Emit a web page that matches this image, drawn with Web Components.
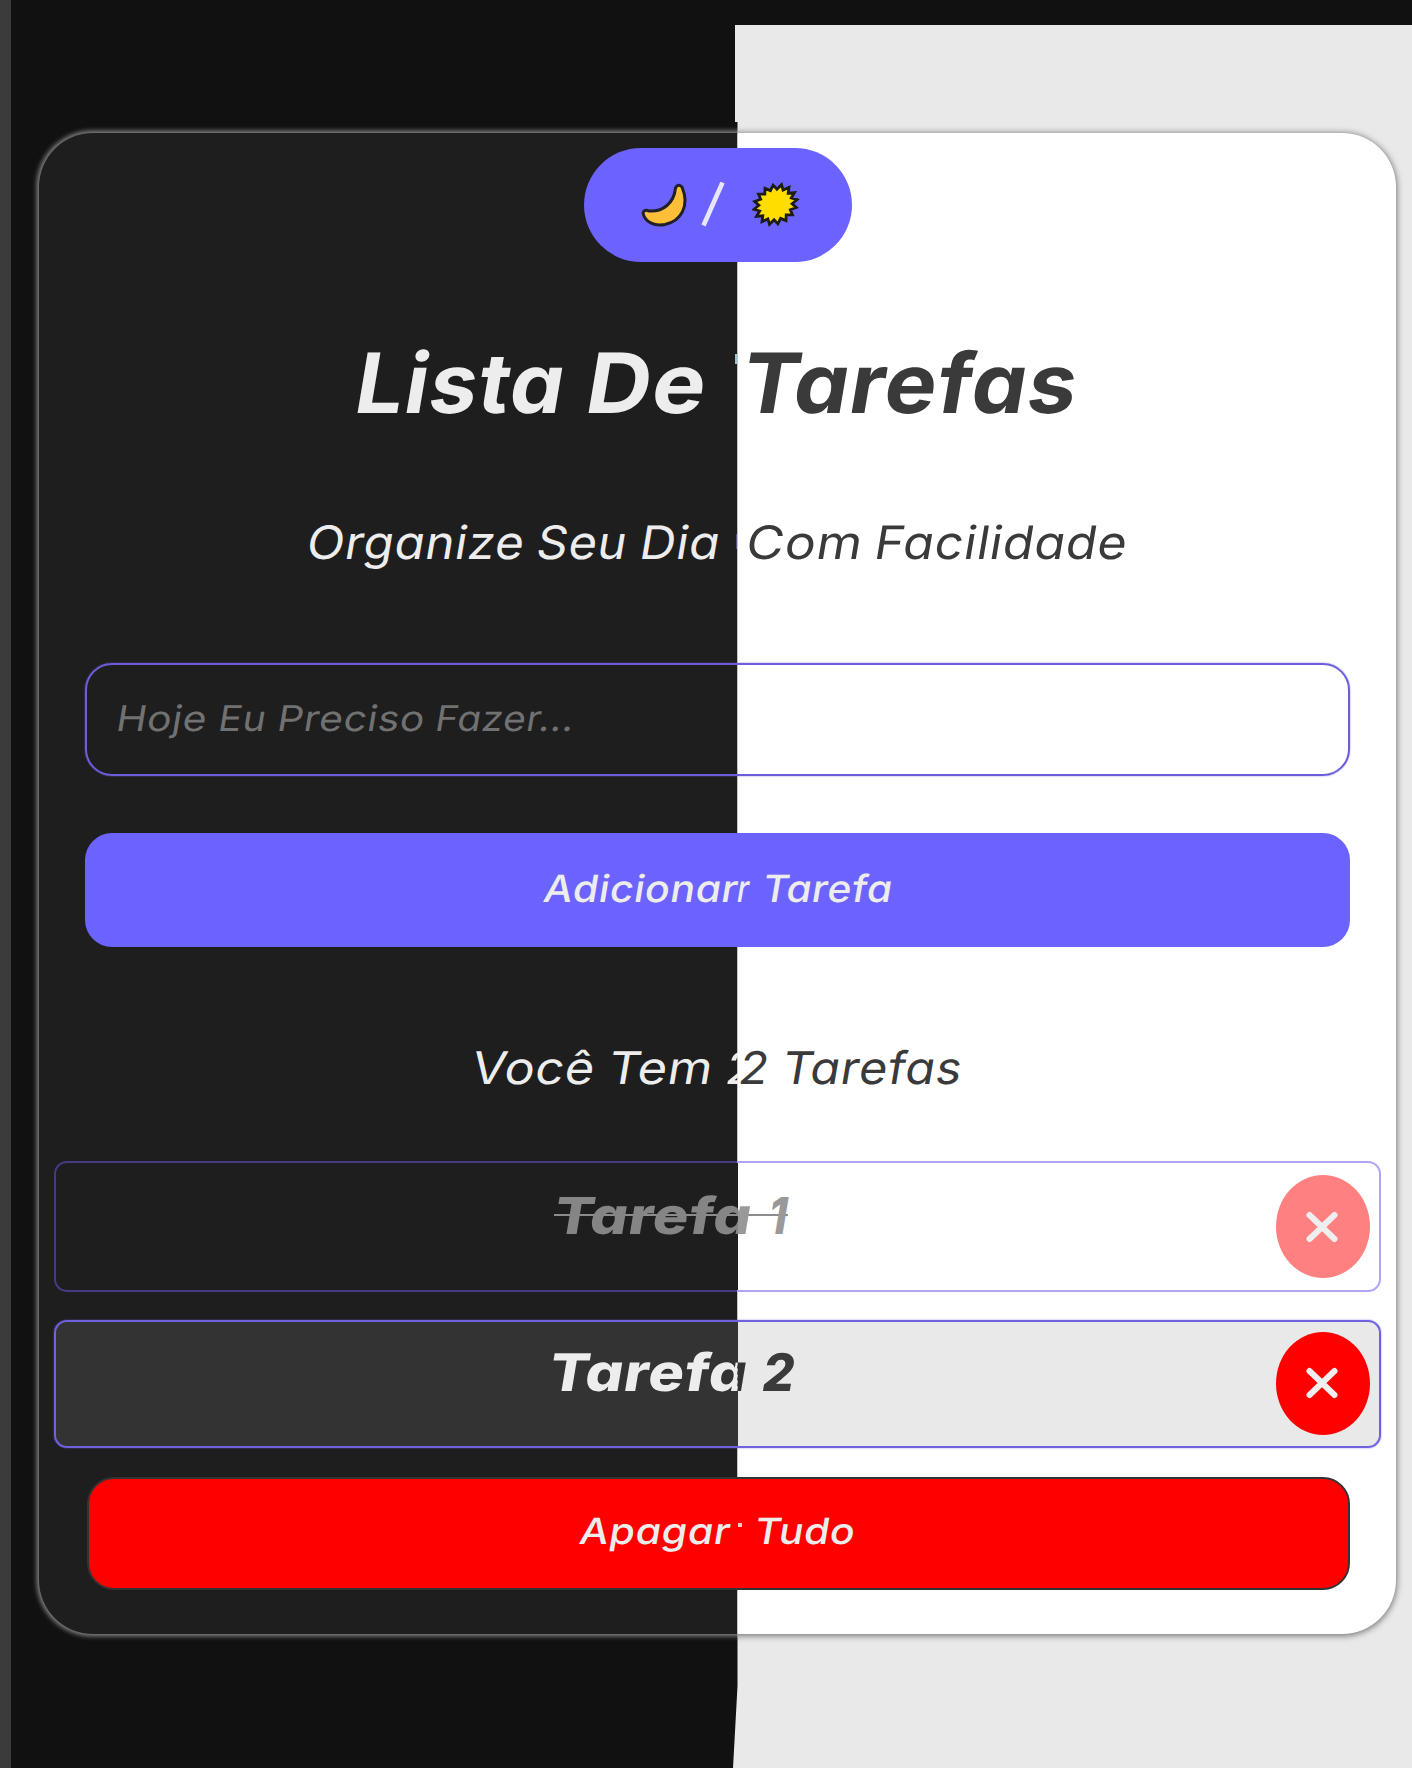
<!DOCTYPE html>
<html lang="pt-BR">
<head>
<meta charset="utf-8">
<title>Lista De Tarefas</title>
<style>
html,body{margin:0;padding:0;background:#111}
body{width:1412px;height:1768px;overflow:hidden;font-family:Inter,"Open Sans",sans-serif}
</style>
</head>
<body>
<todo-page></todo-page>
<script>
const define = (name, html, extra) => {
  const t = document.createElement('template');
  t.innerHTML = html;
  customElements.define(name, class extends HTMLElement {
    connectedCallback() {
      if (this.shadowRoot) return;
      this.attachShadow({ mode: 'open' }).append(t.content.cloneNode(true));
      if (extra) extra(this);
    }
  });
};

/* Themed backdrop: page colour plus the rounded card */
define('theme-backdrop', `<style>
:host{display:block;box-sizing:border-box;width:1412px;height:1768px;padding:133px 0 0 39px;background:#111}
div{width:1357px;height:1501px;border-radius:54px;background:#1e1e1e;box-shadow:0 0 5px 1.5px #8c8c8c}
:host([mode=dark]){border-left:11px solid #3b3b3b;padding-left:28px}
:host([mode=light]){background:#e9e9e9;clip-path:polygon(735px 25px,1412px 25px,1412px 1768px,733px 1768px,737.5px 1686px,737.5px 122px,735px 122px)}
:host([mode=light]) div{background:#fff;box-shadow:0 1px 6px 1px #777}
</style><div></div>`);

/* A slanted word fitted between two horizontal positions */
define('fit-word', `<style>
:host{display:block;flex:none;white-space:pre;font-feature-settings:"cv11"}
:host([tone=light]){color:#ededed}
:host([tone=dark]){color:#3a3a3a}
:host([clip]){overflow:hidden}
span{display:block;width:max-content;transform-origin:0 calc(50% + .364em)}
</style><span><slot></slot></span>`);

const pen = document.createElement('canvas').getContext('2d');
const TAN = Math.tan(9.5 * Math.PI / 180);
const leftSlant = { T: .085, V: .1, O: .045, C: .035, S: .03 };
const rightSlant = { a: .088, m: .085, n: .085, u: .09, r: .09, e: .05, o: .05, s: .06, z: .05, d: .12, 'ê': .05, '1': .12, '2': .06, '.': .01 };
define('text-row', `<style>
:host{display:flex;align-items:center;width:100%;box-sizing:border-box}
</style><slot></slot>`, el => {
  let at = +el.getAttribute('origin') || 0;
  const cs = getComputedStyle(el), fs = parseFloat(cs.fontSize);
  for (const w of el.children) {
    const from = +w.getAttribute('from'), to = +w.getAttribute('to');
    if (w.localName === 'fit-word') {
      customElements.upgrade(w);
      const span = w.shadowRoot.querySelector('span'), text = w.textContent, n = text.length;
      pen.font = `${cs.fontWeight} ${fs}px Inter`;
      const m = pen.measureText(text), gap = fs * .015;
      span.style.letterSpacing = gap + 'px';
      const advance = span.getBoundingClientRect().width || m.width + gap * n;
      const ink = advance - gap - (m.width - m.actualBoundingBoxLeft - m.actualBoundingBoxRight);
      const l = (leftSlant[text[0]] || 0) * fs, r = (rightSlant[text[n - 1]] || 0) * fs;
      const s = (to - from + l - r) / ink;
      const dx = -l + m.actualBoundingBoxLeft * s;
      span.style.transform = `translateX(${dx}px) skewX(-9.5deg) scaleX(${s})`;
      if (w.hasAttribute('seam')) {
        /* two-tone fill whose edge stays vertical after the slant */
        const [seam, a, b] = w.getAttribute('seam').split(' ');
        const theta = Math.atan(TAN / s);
        const x = (seam - from - dx - TAN * .364 * fs) / s;
        const d = (x - advance / 2) * Math.cos(theta);
        span.style.width = advance + 'px';
        span.style.background = `linear-gradient(${Math.PI / 2 - theta}rad,${a} calc(50% + ${d}px),${b} calc(50% + ${d}px))`;
        span.style.webkitBackgroundClip = 'text';
        span.style.color = 'transparent';
      }
    }
    w.style.marginLeft = from - at + 'px';
    at = +w.getAttribute('clip') || to;
    w.style.width = at - from + 'px';
  }
});

define('theme-toggle', `<style>
:host{display:flex;align-items:center;box-sizing:border-box;width:268px;height:114px;border-radius:57px;background:#6c63ff;margin-left:584px;padding-left:56px}
svg{display:block;flex:none}
.slash{margin-left:11px}
.sun{margin-left:27px}
</style>
<svg width="50" height="46" viewBox="0 0 50 46"><path d="M3 31Q4 27 9 29C23 30 34 21 35.500 6Q38 1 42 5C50 24 41 39 25 42.500C14 44.500 5 40 3 31Z" fill="#ffbf38" stroke="#20202c" stroke-width="3" stroke-linejoin="round"/></svg>
<svg class="slash" width="24" height="46" viewBox="0 0 24 46"><path d="M2.500 43.500L21.500 0.500" stroke="#e8e6fb" stroke-width="4.600"/></svg>
<svg class="sun" width="48" height="46" viewBox="0 0 48 46"><path id="s" fill="#ffdd00" stroke="#1c1c10" stroke-width="2.800" stroke-linejoin="miter"/></svg>`, el => {
  let d = '';
  for (let i = 0; i < 32; i++) {
    const r = i % 2 ? 16.5 : 21.5, a = i * Math.PI / 16 + .15;
    const x = Math.cos(a) * r, y = Math.sin(a) * r * .93;
    d += (i ? 'L' : 'M') + (23.5 + x - y * .14).toFixed(1) + ' ' + (22.5 + y).toFixed(1);
  }
  el.shadowRoot.querySelector('#s').setAttribute('d', d + 'Z');
});

define('task-field', `<style>
:host{display:flex;align-items:center;box-sizing:border-box;margin-left:85px;width:1265px;height:113px;border:2px solid #6c5edb;box-shadow:0 0 1.500px #6c5edb;border-radius:27px;padding-bottom:3px;font-size:35.500px;color:#717171}
</style><slot></slot>`);

define('wide-button', `<style>
:host{display:flex;align-items:center;box-sizing:border-box;margin-left:85px;width:1265px;height:114px;border-radius:27px;background:#6c63ff;padding-bottom:4px;font-size:37.500px;font-weight:500}
:host([kind=danger]){background:#f00;margin-left:87px;width:1263px;height:113px;border:2px solid #333;font-size:36px;padding-bottom:5px}
</style><slot></slot>`);

define('task-item', `<style>
:host{display:flex;align-items:center;box-sizing:border-box;margin-left:54px;width:1327px;height:128px;border:2px solid #7062df;box-shadow:0 0 1.500px #7062df;border-radius:13px;background:linear-gradient(90deg,#333 682px,#e9e9e9 682px);font-size:52px;font-weight:800;padding-right:9px}
:host([done]){border-color:transparent;box-shadow:none;height:131px;font-size:51px;
 background:linear-gradient(90deg,#1e1e1e 682px,#fff 682px) padding-box,linear-gradient(90deg,#453b82 683.500px,#aea6f4 683.500px) border-box}
.body{flex:1;display:flex;padding-bottom:22px}
:host(:not([done])) .body{padding-bottom:24px}
.x{display:flex;align-items:center;justify-content:center;width:94px;height:103px;border-radius:50%;background:#f00;flex:none}
:host(:not([done])) .x{margin-bottom:2px}
:host([done]) .x{background:#ff8080}
svg{margin-right:2px}
</style><div class="body"><slot></slot></div><div class="x"><svg width="36" height="34" viewBox="0 0 36 34"><path d="M5.500 5L30.500 29M30.500 5L5.500 29" stroke="#efefef" stroke-width="6" stroke-linecap="round"/></svg></div>`);

/* Thin strokes that sit on the seam between both themes */
define('seam-mark', `<style>
:host{display:block;flex:none}
</style>`);

define('todo-page', `<style>
:host{display:grid;width:1412px;height:1768px}
theme-backdrop,main{grid-area:1/1}
main{display:flex;flex-direction:column;padding-top:147.500px;z-index:1}
.title{font-size:83px;line-height:100px;font-weight:650;margin-top:71px}
.sub{font-size:46px;line-height:60px;font-weight:400;margin-top:79px}
task-field{margin-top:91.500px}
.add{margin-top:57px}
.count{font-size:45px;line-height:60px;font-weight:400;margin-top:91px}
.done{margin-top:63px}
.open{margin-top:28px}
.clear{margin-top:29px}
.g2{color:#999}
.row1{height:64px;background:linear-gradient(#8c8c8c,#8c8c8c) 498px 30px/234px 2px no-repeat}
</style>
<theme-backdrop mode="dark"></theme-backdrop>
<theme-backdrop mode="light"></theme-backdrop>
<main>
<theme-toggle></theme-toggle>
<text-row class="title"><fit-word tone="light" from="357" to="562">Lista</fit-word><fit-word tone="light" from="588" to="703">De</fit-word><seam-mark from="735" to="737" style="height:10px;background:#9bc4d8;transform:translateY(-24px)"></seam-mark><fit-word tone="dark" from="748" to="1075">Tarefas</fit-word></text-row>
<text-row class="sub"><fit-word tone="light" from="309" to="522">Organize</fit-word><fit-word tone="light" from="538" to="625">Seu</fit-word><fit-word tone="light" from="641.5" to="718">Dia</fit-word><seam-mark from="736" to="737" style="height:15px;background:#55518c"></seam-mark><fit-word tone="dark" from="748" to="860">Com</fit-word><fit-word tone="dark" from="877" to="1125">Facilidade</fit-word></text-row>
<task-field><text-row origin="87"><fit-word from="118" to="204.5">Hoje</fit-word><fit-word from="219.5" to="264.5">Eu</fit-word><fit-word from="278.5" to="422.5">Preciso</fit-word><fit-word from="437" to="570">Fazer...</fit-word></text-row></task-field>
<wide-button class="add"><text-row origin="85"><fit-word tone="light" from="541.5" to="738">Adicionar</fit-word><fit-word tone="light" from="737" to="750">r</fit-word><fit-word tone="light" from="765" to="891">Tarefa</fit-word></text-row></wide-button>
<text-row class="count"><fit-word tone="light" from="474.5" to="592.5">Você</fit-word><fit-word tone="light" from="612" to="710">Tem</fit-word><fit-word tone="light" from="727" to="755" clip="737.5">2</fit-word><fit-word tone="dark" from="740" to="766">2</fit-word><fit-word tone="dark" from="786" to="960">Tarefas</fit-word></text-row>
<task-item class="done" done><text-row class="row1" origin="56"><fit-word from="557" to="751" seam="737.5 #858585 #999">Tarefa</fit-word><fit-word class="g2" from="768" to="789">1</fit-word></text-row></task-item>
<task-item class="open"><text-row origin="56"><fit-word from="552" to="746" seam="737.5 #ededed #333">Tarefa</fit-word><fit-word tone="dark" from="762" to="793">2</fit-word></text-row></task-item>
<wide-button class="clear" kind="danger"><text-row origin="89"><fit-word tone="light" from="577.5" to="731">Apagar</fit-word><seam-mark from="738" to="742" style="height:4px;background:#ffcaca;transform:translateY(-6px)"></seam-mark><fit-word tone="light" from="757" to="854">Tudo</fit-word></text-row></wide-button>
</main>`);
</script>
</body>
</html>
